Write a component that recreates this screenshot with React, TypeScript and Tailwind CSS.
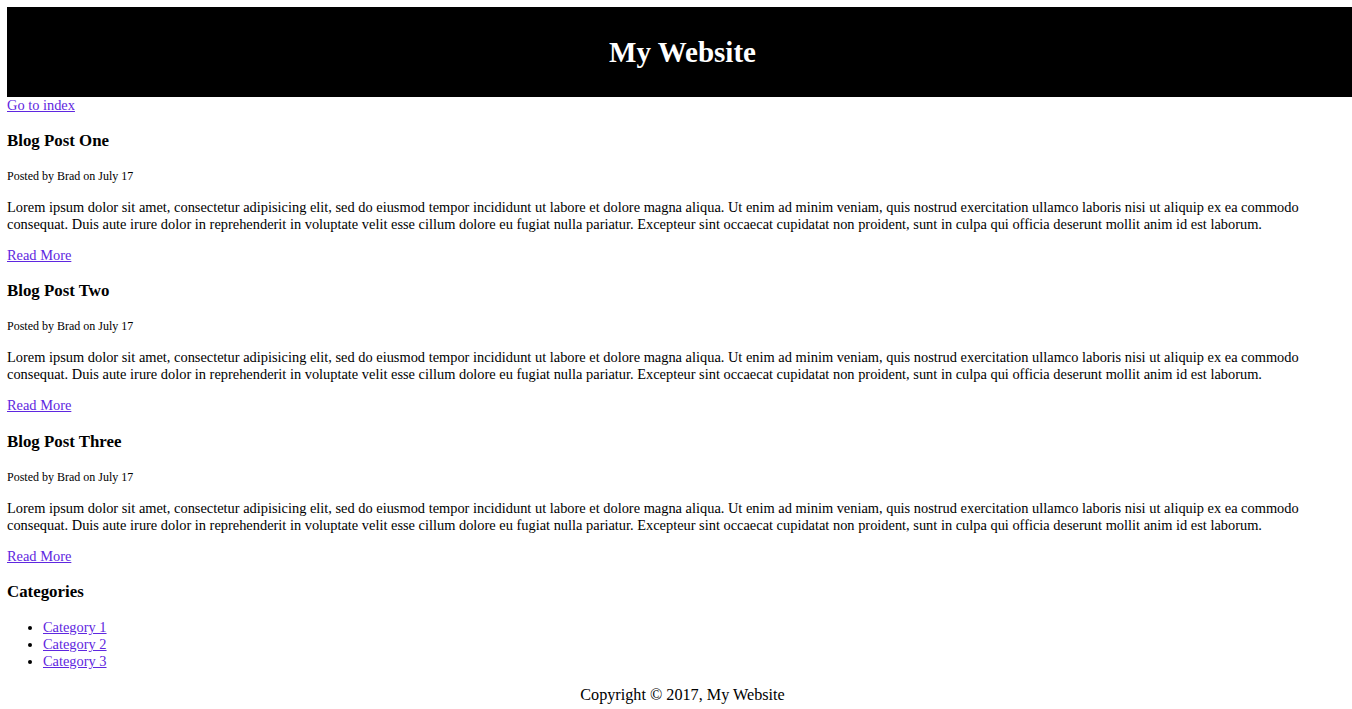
import React from 'react';

const posts = ['Blog Post One', 'Blog Post Two', 'Blog Post Three'];

const lorem =
  'Lorem ipsum dolor sit amet, consectetur adipisicing elit, sed do eiusmod tempor incididunt ut labore et dolore magna aliqua. Ut enim ad minim veniam, quis nostrud exercitation ullamco laboris nisi ut aliquip ex ea commodo consequat. Duis aute irure dolor in reprehenderit in voluptate velit esse cillum dolore eu fugiat nulla pariatur. Excepteur sint occaecat cupidatat non proident, sunt in culpa qui officia deserunt mollit anim id est laborum.';

const linkCls = 'text-[#5f27e0] underline';

export default function App() {
  return (
    <div className="bg-white pl-[7px] pt-[7px] font-['Liberation_Serif',serif] text-[14.4px] leading-[17px] text-black">
      <header className="bg-black h-[90px] flex items-center justify-center">
        <h1 className="text-white font-bold text-[29px] leading-[32px] translate-x-[3px]">My Website</h1>
      </header>

      <a href="#" className={linkCls}>Go to index</a>

      {posts.map((title, i) => (
        <article key={title}>
          <h3
            className={
              i === 2
                ? 'font-bold text-[16.85px] leading-[20px] mt-[18px] mb-[17px]'
                : 'font-bold text-[16.85px] leading-[20px] mt-[17px] mb-[17px]'
            }
          >
            {title}
          </h3>
          <p className="text-[12px] leading-[17px] mb-[14px]">Posted by Brad on July 17</p>
          <p className="mb-[14px] pr-[7px]">{lorem}</p>
          <a href="#" className={linkCls}>Read More</a>
        </article>
      ))}

      <h3 className="font-bold text-[16.85px] leading-[20px] mt-[17px] mb-[17px]">Categories</h3>
      <ul className="list-disc pl-[36px]">
        <li><a href="#" className={linkCls}>Category 1</a></li>
        <li><a href="#" className={linkCls}>Category 2</a></li>
        <li><a href="#" className={linkCls}>Category 3</a></li>
      </ul>

      <footer className="text-center mt-[16px] text-[16.2px] leading-[18px] translate-x-[3px]">
        Copyright © 2017, My Website
      </footer>
    </div>
  );
}
